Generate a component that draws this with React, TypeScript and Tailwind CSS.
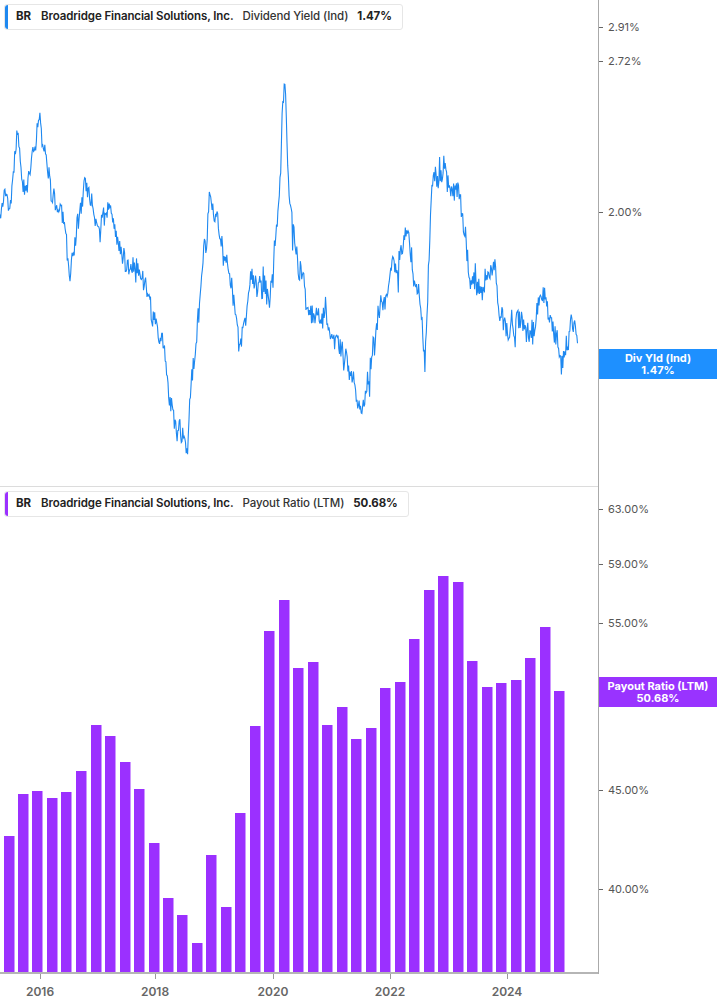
import React from "react";

const bars: [number, number][] = [
  [9,837],[23,795],[37,792],[52,799],[66,793],[81,772],[96,726],[110,737],[125,763],[139,790],[154,844],[168,899],[182,916],[197,944],[211,856],[226,908],[240,814],[255,727],[269,632],[284,601],[298,669],[313,663],[327,726],[342,708],[356,740],[371,729],[385,689],[400,683],[414,640],[429,591],[443,577],[458,583],[472,662],[487,688],[501,684],[516,681],[530,659],[545,628],[559,692],
];

const anchors: [number, number][] = [
  [0,210],[5,185],[10,200],[18,130],[25,195],[32,160],[40,125],[50,185],[60,205],[70,270],[78,220],[85,195],[100,225],[110,210],[120,245],[130,270],[140,260],[150,310],[158,330],[165,360],[170,410],[180,440],[187,450],[192,375],[200,310],[210,190],[220,235],[230,265],[240,360],[250,280],[260,290],[270,300],[280,180],[284,90],[290,220],[300,260],[310,320],[320,310],[330,325],[345,360],[355,390],[362,415],[375,340],[385,300],[395,270],[408,240],[420,300],[425,360],[432,190],[445,180],[455,185],[465,240],[475,290],[485,280],[495,270],[500,315],[510,330],[525,315],[535,340],[540,300],[545,295],[555,325],[565,355],[575,320],[578,362],
];

function buildLine() {
  let s = 12345;
  const rnd = () => {
    s = (s * 1103515245 + 12345) % 2147483648;
    return s / 2147483648;
  };
  const pts: string[] = [];
  let drift = 0;
  for (let x = 0; x <= 578; x += 0.7) {
    let i = 0;
    while (i < anchors.length - 2 && anchors[i + 1][0] < x) i++;
    const [x0, y0] = anchors[i];
    const [x1, y1] = anchors[i + 1];
    const t = Math.min(1, Math.max(0, (x - x0) / (x1 - x0)));
    drift = drift * 0.8 + (rnd() - 0.5) * 14;
    const spike = rnd() < 0.06 ? (rnd() - 0.5) * 40 : 0;
    const y = y0 + (y1 - y0) * t + drift + (rnd() - 0.5) * 18 + spike;
    pts.push(`${x.toFixed(1)},${y.toFixed(1)}`);
  }
  return "M" + pts.join(" L");
}
const linePath = buildLine();

const font = { fontFamily: "Inter, 'Liberation Sans', sans-serif" };

function Legend({ color, metric, value }: { color: string; metric: string; value: string }) {
  return (
    <div className="absolute left-[4px] top-[4px] flex h-[26px] items-center rounded-[3px] border border-[#e6e6e6] bg-white pr-[10px] text-[11.5px] font-semibold tracking-[-0.1px] text-[#222]">
      <div className="h-full w-[3px] rounded-l-[3px]" style={{ background: color }} />
      <span className="ml-[8px] font-bold">BR</span>
      <span className="ml-[10px]">Broadridge Financial Solutions, Inc.</span>
      <span className="ml-[9px] font-medium text-[#333]">{metric}</span>
      <span className="ml-[9px] font-bold">{value}</span>
    </div>
  );
}

function Tick({ y, label }: { y: number; label: string }) {
  return (
    <div className="absolute left-0 flex items-center text-[11px] text-[#555]" style={{ top: y - 8 }}>
      <div className="h-px w-[4px] bg-[#666]" />
      <span className="ml-[5px]">{label}</span>
    </div>
  );
}

export default function App() {
  return (
    <div className="flex h-[1005px] w-[717px] flex-col bg-white" style={font}>
      <div className="flex h-[487px]">
        <div className="relative w-[598px] border-b border-[#dcdcdc]">
          <svg width="598" height="486" className="absolute left-0 top-0">
            <path d={linePath} fill="none" stroke="#1e88f0" strokeWidth="1.1" />
          </svg>
          <Legend color="#1e88f0" metric="Dividend Yield (Ind)" value="1.47%" />
        </div>
        <div className="relative flex-1 border-l border-[#aaa]">
          <Tick y={27} label="2.91%" />
          <Tick y={61} label="2.72%" />
          <Tick y={212} label="2.00%" />
          <div className="absolute left-0 right-0 top-[349px] flex h-[30px] flex-col items-center justify-center bg-[#1e90ff] text-[11px] font-bold leading-[12px] text-white">
            <span>Div Yld (Ind)</span>
            <span>1.47%</span>
          </div>
        </div>
      </div>
      <div className="flex h-[487px]">
        <div className="relative w-[598px] border-b-2 border-[#b5b5b5]">
          <svg width="598" height="485" className="absolute left-0 top-0">
            {bars.map(([x, y], i) => (
              <rect key={i} x={x - 5} y={y - 488} width={10.5} height={974 - y} fill="#9b30ff" />
            ))}
          </svg>
          <Legend color="#9b30ff" metric="Payout Ratio (LTM)" value="50.68%" />
        </div>
        <div className="relative flex-1 border-l border-[#aaa]">
          <Tick y={22} label="63.00%" />
          <Tick y={77} label="59.00%" />
          <Tick y={136} label="55.00%" />
          <Tick y={303} label="45.00%" />
          <Tick y={402} label="40.00%" />
          <div className="absolute left-0 right-0 top-[190px] flex h-[30px] flex-col items-center justify-center bg-[#9933ff] text-[11px] font-bold leading-[12px] text-white">
            <span>Payout Ratio (LTM)</span>
            <span>50.68%</span>
          </div>
        </div>
      </div>
      <div className="relative flex h-[31px]">
        {[["2016", 40], ["2018", 155], ["2020", 273], ["2022", 390], ["2024", 507]].map(([l, x]) => (
          <div key={l} className="absolute top-0 flex flex-col items-center" style={{ left: (x as number) - 15, width: 30 }}>
            <div className="h-[5px] w-px bg-[#999]" />
            <span className="mt-[4px] text-[12px] font-semibold text-[#666]">{l}</span>
          </div>
        ))}
      </div>
    </div>
  );
}
